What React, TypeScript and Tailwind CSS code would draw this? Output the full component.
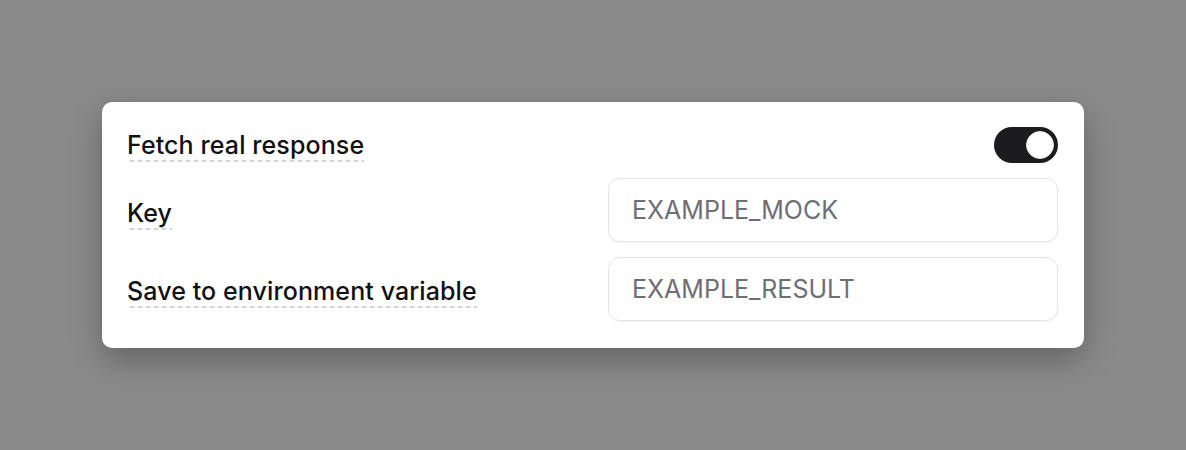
import { useState } from 'react';

// dashed underline drawn with a background so the dash rhythm matches
const Label = ({ children }: { children: React.ReactNode }) => (
  <span className="inline-block bg-[linear-gradient(to_right,#d6d6d6_5px,transparent_5px)] bg-[length:8px_2px] bg-bottom bg-repeat-x pb-[4px] text-[25px] leading-[26px] font-medium tracking-[0.1px] text-[#111111]">
    {children}
  </span>
);

export default function App() {
  const [fetchReal, setFetchReal] = useState(true);

  return (
    <div
      className="flex h-[450px] w-full items-start justify-center bg-[#8a8a8a] pt-[102px]"
      style={{ fontFamily: 'Inter, "Noto Sans", sans-serif' }}
    >
      <div className="w-[982px] rounded-[10px] bg-white pl-[25px] pr-[26px] pt-[25px] pb-[27px] shadow-[0_12px_32px_rgba(0,0,0,0.28)]">
        {/* Toggle row */}
        <div className="flex h-[36px] items-start justify-between">
          <div className="pt-[5px]">
            <Label>Fetch real response</Label>
          </div>
          <button
            onClick={() => setFetchReal(!fetchReal)}
            className={`relative h-[36px] w-[64px] rounded-full ${fetchReal ? 'bg-[#1c1c1e]' : 'bg-[#d4d4d8]'}`}
          >
            <span
              className={`absolute top-[4px] h-[28px] w-[28px] rounded-full border border-[#e5e5e5] bg-white ${fetchReal ? 'left-[32px]' : 'left-[4px]'}`}
            />
          </button>
        </div>

        {/* Fields */}
        <div className="mt-[15px] grid grid-cols-[1fr_450px] gap-x-[31px] gap-y-[15px]">
          <div className="h-[64px] pt-[22px]">
            <Label>Key</Label>
          </div>
          <input
            type="text"
            placeholder="EXAMPLE_MOCK"
            className="h-[64px] w-full rounded-[12px] border border-[#e4e4e7] px-[23px] text-[25px] text-[#111] shadow-[0_1px_2px_rgba(0,0,0,0.05)] outline-none placeholder:text-[#6e6e76]"
          />
          <div className="h-[64px] pt-[21px]">
            <Label>Save to environment variable</Label>
          </div>
          <input
            type="text"
            placeholder="EXAMPLE_RESULT"
            className="h-[64px] w-full rounded-[12px] border border-[#e4e4e7] px-[23px] text-[25px] text-[#111] shadow-[0_1px_2px_rgba(0,0,0,0.05)] outline-none placeholder:text-[#6e6e76]"
          />
        </div>
      </div>
    </div>
  );
}
